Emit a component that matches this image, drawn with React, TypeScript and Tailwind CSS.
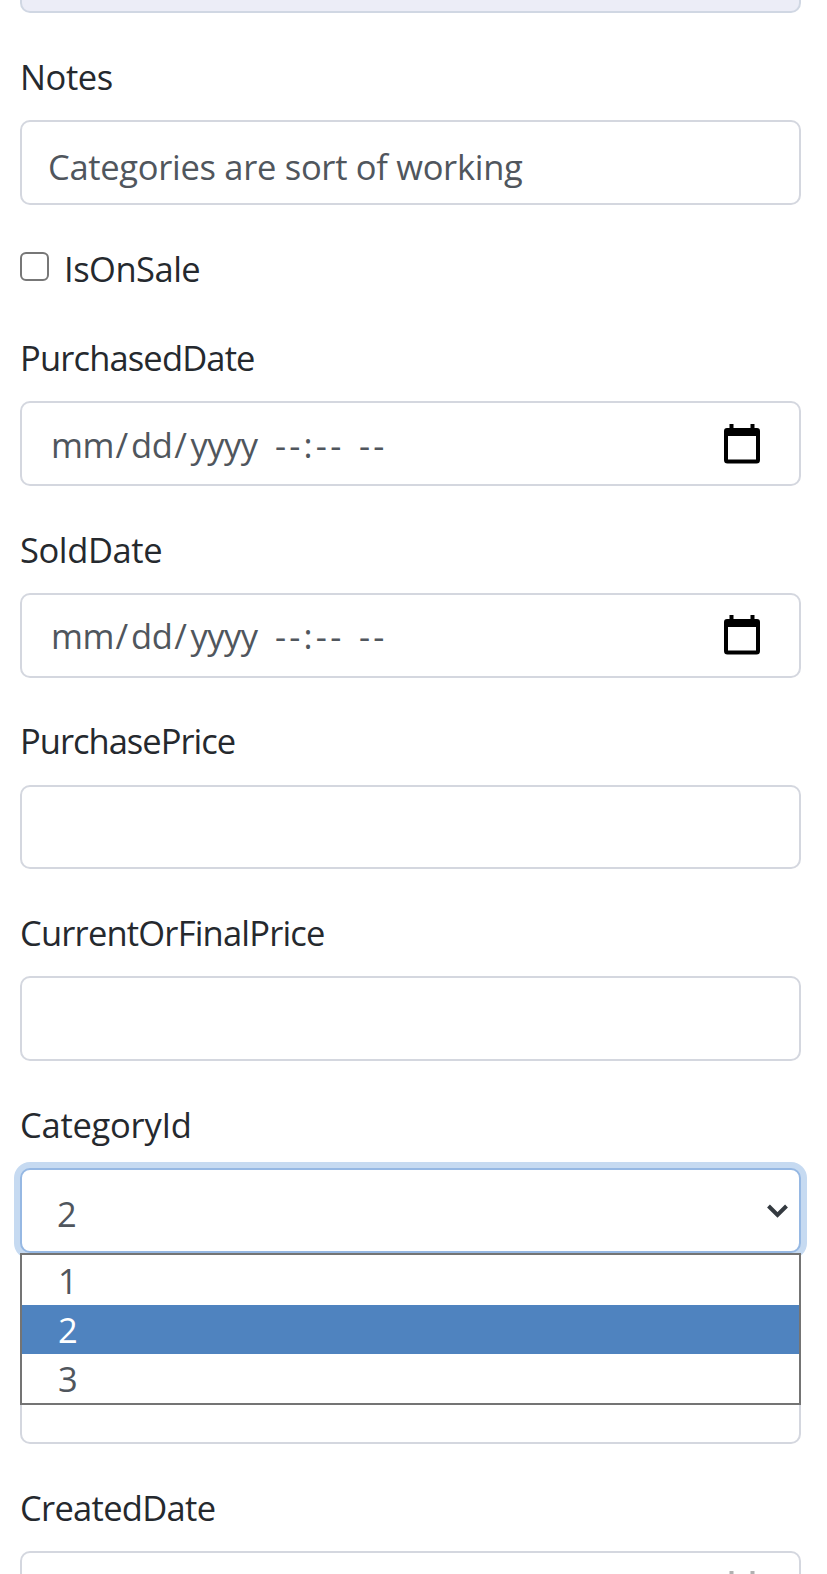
import type { ReactNode } from "react";

const box =
  "flex h-[84.5px] w-[780.5px] shrink-0 items-center rounded-[10px] border-[2.5px] border-[#d4d7df] bg-white text-[#50565d]";

function Field({ label, tracking, children }: { label: string; tracking: string; children: ReactNode }) {
  return (
    <div className="flex h-[191.7px] shrink-0 flex-col justify-end">
      <label className={`mb-[18.5px] block h-[50px] leading-[50px] whitespace-nowrap ${tracking}`}>{label}</label>
      {children}
    </div>
  );
}

function CalendarIcon() {
  return (
    <svg className="h-[40px] w-[36px]" viewBox="0 0 36 40" fill="none">
      <path d="M7.500 0v6M28.500 0v6" stroke="#000" strokeWidth="4" />
      <path
        fillRule="evenodd"
        d="M3 4h30a3 3 0 0 1 3 3v29a3.500 3.500 0 0 1-3.500 3.500h-29A3.500 3.500 0 0 1 0 36V7a3 3 0 0 1 3-3zM4 12v23.500h28V12z"
        fill="#000"
      />
    </svg>
  );
}

function DateInput() {
  return (
    <div className={`${box} justify-between pr-[38.5px] pl-[29px]`}>
      <div className="flex pt-[2px] whitespace-pre">
        <span className="w-[224px] tracking-[-0.5px]">
          mm<span className="mr-[3.5px] ml-[1.5px]">/</span>dd<span className="mr-[4px] ml-[2px]">/</span>yyyy
        </span>
        <span className="w-[84px] tracking-[3.2px]">--:--</span>
        <span className="tracking-[3.2px]">--</span>
      </div>
      <CalendarIcon />
    </div>
  );
}

function Option({ value, active = false }: { value: string; active?: boolean }) {
  return (
    <div
      className={
        active
          ? "flex h-[49px] items-center bg-[#4f83bf] pt-[1px] pl-[36px] text-white"
          : "flex h-[49px] items-center pt-[1px] pl-[36px]"
      }
    >
      {value}
    </div>
  );
}

export default function App() {
  return (
    <main className="flex h-[1574px] w-[827px] flex-col overflow-hidden bg-white pl-[20px] font-['Open_Sans','Noto_Sans',sans-serif] text-[34.5px] leading-[48px] text-[#25292e]">
      <div className="h-[13.3px] w-[780.5px] shrink-0 rounded-b-[10px] border-[2.5px] border-t-0 border-[#d0d7e3] bg-[#ecedf7]" />
      <Field label="Notes" tracking="tracking-[-0.4px]">
        <div className={`${box} pt-[8px] pl-[26px]`}>
          <span className="tracking-[-0.3px] whitespace-nowrap">Categories are sort of working</span>
        </div>
      </Field>
      <div className="flex h-[89.2px] shrink-0 items-end">
        <span className="mb-[13px] h-[29px] w-[29px] rounded-[6px] border-2 border-[#777777] bg-white" />
        <span className="mb-[1.5px] ml-[15px] tracking-[-0.5px]">IsOnSale</span>
      </div>
      <Field label="PurchasedDate" tracking="tracking-[-0.85px]">
        <DateInput />
      </Field>
      <Field label="SoldDate" tracking="tracking-[-0.4px]">
        <DateInput />
      </Field>
      <Field label="PurchasePrice" tracking="tracking-[-1px]">
        <div className={box} />
      </Field>
      <Field label="CurrentOrFinalPrice" tracking="tracking-[-0.8px]">
        <div className={box} />
      </Field>
      <Field label="CategoryId" tracking="tracking-[-0.25px]">
        <div className="relative">
          <div className="flex h-[84.5px] w-[780.5px] items-center justify-between rounded-[10px] border-[2.5px] border-[#96b8e3] bg-white pt-[7px] pr-[11px] pl-[35px] text-[#50565d] shadow-[0_0_0_6px_#c6daf1]">
            <span>2</span>
            <svg className="mb-[5px] h-[14px] w-[21px]" viewBox="0 0 21 14" fill="none">
              <path d="M1.500 2l9 9 9-9" stroke="#343a40" strokeWidth="4" />
            </svg>
          </div>
          <div className="absolute top-[84.5px] left-0 z-10 h-[152px] w-[780.5px] border-2 border-[#747474] bg-white pt-[1px] text-[#50565d]">
            <Option value="1" />
            <Option value="2" active />
            <Option value="3" />
          </div>
        </div>
      </Field>
      <div className="flex h-[191.7px] shrink-0 flex-col justify-end">
        <div className={box} />
      </div>
      <Field label="CreatedDate" tracking="tracking-[-0.7px]">
        <div className={`${box} items-start justify-end pt-[18px] pr-[38.5px]`}>
          <div className="opacity-30">
            <CalendarIcon />
          </div>
        </div>
      </Field>
    </main>
  );
}
